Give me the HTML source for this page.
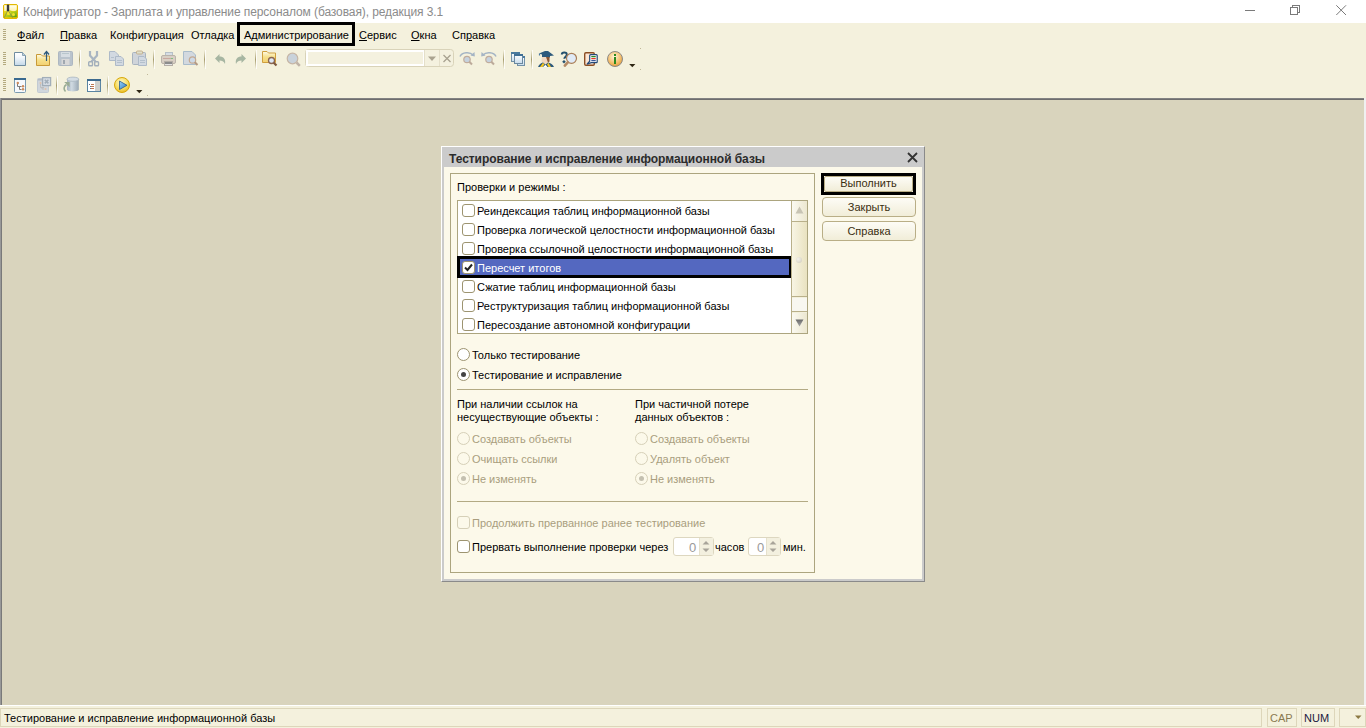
<!DOCTYPE html>
<html><head><meta charset="utf-8">
<style>
*{margin:0;padding:0;box-sizing:border-box}
html,body{width:1366px;height:728px;overflow:hidden;background:#fff;font-family:"Liberation Sans",sans-serif;font-size:11px;color:#000}
.a{position:absolute}
.t{position:absolute;white-space:nowrap;line-height:13px;font-size:11px}
#title{left:0;top:0;width:1366px;height:23px;background:#fff}
#bars{left:0;top:23px;width:1366px;height:75px;background:#f4f1dd}
#ws{left:0;top:98px;width:1366px;height:608px;background:#d9d4bd}
#status{left:0;top:706px;width:1366px;height:22px;background:#f4f1dd}
.grip{position:absolute;width:4px;background:repeating-linear-gradient(#b0a780 0 1px,transparent 1px 2px)}
.sep{position:absolute;width:1px;height:18px;background:#cfc7a4}
.mu{text-decoration:underline}
.dlg{left:441px;top:146px;width:484px;height:436px;background:#cbcbcb;border-left:1px solid #fff;border-top:1px solid #fff;border-right:1px solid #8a8a8a;border-bottom:1px solid #8a8a8a}
.gb{border:1px solid #aca57f}
.cb{position:absolute;width:13px;height:13px;border:1px solid #9d9470;border-radius:3px;background:#fff}
.rb{position:absolute;width:13px;height:13px;border:1px solid #9d9470;border-radius:50%;background:#fff}
.dis{color:#a99e7e}
.btn{position:absolute;height:20px;border:1px solid #b9ae86;border-radius:4px;background:linear-gradient(#fdfcf6,#f1edd8);text-align:center;line-height:18px;font-size:11px;color:#3a2e10}
</style></head><body>
<div id="title" class="a">
  <svg class="a" style="left:3px;top:4px" width="15" height="15" viewBox="0 0 15 15">
    <defs><linearGradient id="gsky" x1="0" y1="0" x2="0" y2="1"><stop offset="0" stop-color="#fffff4"/><stop offset="1" stop-color="#fff2a8"/></linearGradient>
    <linearGradient id="ggr" x1="0" y1="0" x2="1" y2="1"><stop offset="0" stop-color="#f4e020"/><stop offset="0.6" stop-color="#a8c818"/><stop offset="1" stop-color="#4c9a10"/></linearGradient></defs>
    <rect x="0.5" y="0.5" width="14" height="14" rx="1.5" fill="#f2c800" stroke="#e2b800" stroke-width="1"/>
    <rect x="1.2" y="1.2" width="12.6" height="6" fill="url(#gsky)"/>
    <path d="M1.2 7.5Q6 5.5 9 7T13.8 5.5V13.2H1.2Z" fill="url(#ggr)"/>
    <circle cx="5.5" cy="9" r="2" fill="#f6e428"/><circle cx="10.5" cy="10.5" r="1.5" fill="#f0e030"/>
    <path d="M4.5 7L1.2 13.8M5.5 7L9.8 13.8" stroke="#8a8a50" stroke-width=".8"/>
    <rect x="3.8" y="0.5" width="2.4" height="5.5" rx="1" fill="#3c3c3c"/>
    <circle cx="5" cy="6" r="1.3" fill="#2c3444"/>
  </svg>
  <div class="t" style="left:23px;top:5px;font-size:12px;line-height:14px;color:#8b8b8b;letter-spacing:-0.1px">Конфигуратор - Зарплата и управление персоналом (базовая), редакция 3.1</div>
  <div class="a" style="left:1245px;top:10px;width:10px;height:1px;background:#7a7a7a"></div>
  <div class="a" style="left:1292px;top:5px;width:8px;height:8px;border:1px solid #7a7a7a"></div>
  <div class="a" style="left:1290px;top:7px;width:8px;height:8px;border:1px solid #7a7a7a;background:#fff"></div>
  <svg class="a" style="left:1336px;top:5px" width="11" height="11" viewBox="0 0 11 11"><path d="M0.3 0.3L10 10M10 0.3L0.3 10" stroke="#7a7a7a" stroke-width="1"/></svg>
</div>

<div id="bars" class="a">
  <!-- menu -->
  <div class="t" style="left:17px;top:6px"><span class="mu">Ф</span>айл</div>
  <div class="t" style="left:60px;top:6px"><span class="mu">П</span>равка</div>
  <div class="t" style="left:110px;top:6px">Конфигурация</div>
  <div class="t" style="left:191px;top:6px">Отладка</div>
  <div class="a" style="left:237px;top:-1px;width:118px;height:24px;border:3px solid #000"></div>
  <div class="t" style="left:244px;top:6px">Администрирование</div>
  <div class="t" style="left:359px;top:6px"><span class="mu">С</span>ервис</div>
  <div class="t" style="left:411px;top:6px"><span class="mu">О</span>кна</div>
  <div class="t" style="left:452px;top:6px">Сп<span class="mu">р</span>авка</div>
</div>


<div id="icons" class="a" style="left:0;top:0;width:1366px;height:98px">
<svg class="a" style="left:0;top:0" width="660" height="98" viewBox="0 0 660 98">
<defs>
 <linearGradient id="gdoc" x1="0" y1="0" x2="0" y2="1"><stop offset="0" stop-color="#ffffff"/><stop offset="0.35" stop-color="#f4f8fc"/><stop offset="1" stop-color="#c4d8e8"/></linearGradient>
 <linearGradient id="gfold" x1="0" y1="0" x2="0" y2="1"><stop offset="0" stop-color="#fffbe6"/><stop offset="0.5" stop-color="#f6e08a"/><stop offset="1" stop-color="#f2d070"/></linearGradient>
 <linearGradient id="gsep" x1="0" y1="0" x2="0" y2="1"><stop offset="0" stop-color="#f4f1dd"/><stop offset="0.5" stop-color="#a89e70"/><stop offset="1" stop-color="#f4f1dd"/></linearGradient>
 <linearGradient id="gwin" x1="0" y1="0" x2="0" y2="1"><stop offset="0" stop-color="#ffffff"/><stop offset="1" stop-color="#c8dcec"/></linearGradient>
 <radialGradient id="ginfo" cx="0.45" cy="0.35" r="0.7"><stop offset="0" stop-color="#fff4d8"/><stop offset="0.6" stop-color="#f4c070"/><stop offset="1" stop-color="#e09a30"/></radialGradient>
 <radialGradient id="gplay" cx="0.45" cy="0.35" r="0.7"><stop offset="0" stop-color="#fffbd0"/><stop offset="0.6" stop-color="#f6dc60"/><stop offset="1" stop-color="#e8b418"/></radialGradient>
 <linearGradient id="gtri" x1="0" y1="0" x2="1" y2="1"><stop offset="0" stop-color="#9ad4f8"/><stop offset="1" stop-color="#2a78c8"/></linearGradient>
 <linearGradient id="gcyl" x1="0" y1="0" x2="1" y2="0"><stop offset="0" stop-color="#a8b4c0"/><stop offset="0.4" stop-color="#d0dae2"/><stop offset="1" stop-color="#9aa8b4"/></linearGradient>
</defs>
<!-- grips -->
<g fill="#b3a97f">
 <rect x="3" y="29" width="3" height="1"/><rect x="3" y="31" width="3" height="1"/><rect x="3" y="33" width="3" height="1"/><rect x="3" y="35" width="3" height="1"/><rect x="3" y="37" width="3" height="1"/><rect x="3" y="39" width="3" height="1"/>
 <rect x="3" y="52" width="3" height="1"/><rect x="3" y="54" width="3" height="1"/><rect x="3" y="56" width="3" height="1"/><rect x="3" y="58" width="3" height="1"/><rect x="3" y="60" width="3" height="1"/><rect x="3" y="62" width="3" height="1"/><rect x="3" y="64" width="3" height="1"/>
 <rect x="3" y="78" width="3" height="1"/><rect x="3" y="80" width="3" height="1"/><rect x="3" y="82" width="3" height="1"/><rect x="3" y="84" width="3" height="1"/><rect x="3" y="86" width="3" height="1"/><rect x="3" y="88" width="3" height="1"/><rect x="3" y="90" width="3" height="1"/>
</g>
<!-- separators -->
<g>
 <rect x="79" y="50" width="1" height="19" fill="url(#gsep)"/><rect x="80" y="50" width="1" height="19" fill="#fff" opacity=".8"/>
 <rect x="153" y="50" width="1" height="19" fill="url(#gsep)"/><rect x="154" y="50" width="1" height="19" fill="#fff" opacity=".8"/>
 <rect x="204" y="50" width="1" height="19" fill="url(#gsep)"/><rect x="205" y="50" width="1" height="19" fill="#fff" opacity=".8"/>
 <rect x="255" y="50" width="1" height="19" fill="url(#gsep)"/><rect x="256" y="50" width="1" height="19" fill="#fff" opacity=".8"/>
 <rect x="503" y="50" width="1" height="19" fill="url(#gsep)"/><rect x="504" y="50" width="1" height="19" fill="#fff" opacity=".8"/>
 <rect x="531" y="50" width="1" height="19" fill="url(#gsep)"/><rect x="532" y="50" width="1" height="19" fill="#fff" opacity=".8"/>
 <rect x="56" y="76" width="1" height="19" fill="url(#gsep)"/><rect x="57" y="76" width="1" height="19" fill="#fff" opacity=".8"/>
 <rect x="107" y="76" width="1" height="19" fill="url(#gsep)"/><rect x="108" y="76" width="1" height="19" fill="#fff" opacity=".8"/>
</g>
<!-- new doc -->
<path d="M14.5 52.5H22.5L25.5 55.5V65.5H14.5Z" fill="url(#gdoc)" stroke="#6f8ca0"/>
<path d="M22.5 52.5V55.5H25.5" fill="#c0d0dc" stroke="#8aa4b4"/>
<!-- open folder -->
<path d="M36.5 54.5H41L42.5 56H49.5V65.5H36.5Z" fill="url(#gfold)" stroke="#c89a38"/>
<path d="M46.5 61V52" stroke="#2e5a7c" stroke-width="1.2"/>
<path d="M44 54.5L46.5 51.5L49 54.5" fill="none" stroke="#2e5a7c" stroke-width="1.4"/>
<!-- save disabled -->
<rect x="58.5" y="51.5" width="14" height="14" rx="1" fill="#b9c3cc" stroke="#adb7c1"/>
<rect x="61" y="52" width="9" height="5" fill="#d6dde2"/><rect x="62" y="53" width="7" height="1" fill="#b8c6cc"/>
<rect x="61.5" y="59" width="8" height="6" fill="#d8d8d8"/><rect x="63" y="60" width="2" height="4" fill="#a0a8b0"/>
<!-- scissors -->
<path d="M90 51V55.5L95.5 61.5M97 51V55.5L91.5 61.5" fill="none" stroke="#a9b5c1" stroke-width="2.2"/>
<rect x="88.7" y="61.7" width="3.8" height="4" rx=".8" fill="none" stroke="#a3afbb" stroke-width="1.4"/>
<rect x="94.7" y="61.7" width="3.8" height="4" rx=".8" fill="none" stroke="#a3afbb" stroke-width="1.4"/>
<!-- copy -->
<path d="M109.5 51.5H115L118.5 55V60.5H109.5Z" fill="#d2d9e1" stroke="#aebac8"/>
<path d="M115.5 56.5H121L123.5 59V65.5H115.5Z" fill="#d2d9e1" stroke="#aebac8"/>
<path d="M117 60.5H122M117 62.5H122M111 57.5H114" stroke="#b4c0cc"/>
<!-- paste -->
<rect x="132.5" y="52.5" width="13" height="12" rx="1" fill="#cfd4da" stroke="#a8b3bf"/>
<rect x="136.5" y="51" width="6" height="3" rx="1" fill="#dfe0cc" stroke="#c4b08e"/>
<path d="M138.5 56.5H144L146.5 59V65.5H138.5Z" fill="#d2d9e1" stroke="#aebac8"/>
<path d="M140 60.5H145M140 62.5H145" stroke="#b4c0cc"/>
<!-- printer -->
<rect x="165.5" y="52.5" width="7" height="5" fill="#d6dde4" stroke="#b6c0c8"/>
<rect x="161.5" y="55.5" width="14" height="8" rx="1.5" fill="#d8cfc4" stroke="#bab3aa"/>
<rect x="163" y="58" width="10" height="1" fill="#c8a8a0"/><rect x="171" y="58" width="2" height="1" fill="#80c080"/>
<rect x="164.5" y="61.5" width="8" height="4" fill="#e4e4e4" stroke="#b4aea6"/><rect x="165" y="62" width="7" height="2" fill="#8c8c8c"/>
<!-- print preview -->
<path d="M183.5 51.5H192L195.5 55V64.5H183.5Z" fill="#d3d9df" stroke="#a9bccb"/>
<circle cx="192.5" cy="60" r="3.2" fill="#cdd9e6" stroke="#c4aa92" stroke-width="1.2"/>
<path d="M194.8 62.3L197.5 65" stroke="#b39a84" stroke-width="2"/>
<!-- undo -->
<path d="M215 58.5L219.5 54V56.5C223.5 56.5 226 59 225 64C223.8 61 222 60.5 219.5 60.5V63Z" fill="#a7b6a2"/>
<!-- redo -->
<path d="M246 58.5L241.5 54V56.5C237.5 56.5 235 59 236 64C237.2 61 239 60.5 241.5 60.5V63Z" fill="#a7b6a2"/>
<!-- folder search -->
<path d="M262.5 51.5H267L268.5 53H275.5V62.5H262.5Z" fill="url(#gfold)" stroke="#cf9f3e"/>
<circle cx="271.5" cy="60.5" r="3" fill="#dde8f6" stroke="#8a6652" stroke-width="1.3"/>
<path d="M273.7 62.7L276.5 65.5" stroke="#7e5a40" stroke-width="2.2"/>
<!-- search disabled -->
<circle cx="292.5" cy="58.5" r="5.3" fill="#c9d2da" stroke="#c6b6a6" stroke-width="1.2"/>
<path d="M296.5 62.5L299.8 65.8" stroke="#c0b4a8" stroke-width="2.5"/>
<!-- search box -->
<rect x="305.5" y="49.5" width="148" height="17" rx="3" fill="#f4f1df" stroke="#d9d3b9"/>
<rect x="307" y="51" width="117" height="14" fill="none" stroke="#fff" stroke-width="2"/>
<rect x="424" y="50" width="1" height="16" fill="#e4dfca"/>
<rect x="439" y="50" width="1" height="16" fill="#e4dfca"/>
<path d="M428 56.5H436L432 61Z" fill="#aaa390"/>
<path d="M443.5 55L450.5 62M450.5 55L443.5 62" stroke="#a8a290" stroke-width="1.3"/>
<!-- find next -->
<path d="M460 56.5C462 52 470 51.5 473 55" fill="none" stroke="#a4b4c4" stroke-width="1.5"/>
<path d="M470.5 55.5L474.8 56.5L474.5 52Z" fill="#a4b4c4"/>
<circle cx="467" cy="59.5" r="3.2" fill="#c6d2de" stroke="#c0ac9c" stroke-width="1.2"/>
<path d="M469.3 61.8L472 64.5" stroke="#bcaa9a" stroke-width="2"/>
<!-- find prev -->
<path d="M496 56.5C494 52 486 51.5 483 55" fill="none" stroke="#a4b4c4" stroke-width="1.5"/>
<path d="M485.5 55.5L481.2 56.5L481.5 52Z" fill="#a4b4c4"/>
<circle cx="489" cy="59.5" r="3.2" fill="#c6d2de" stroke="#c0ac9c" stroke-width="1.2"/>
<path d="M491.3 61.8L494 64.5" stroke="#bcaa9a" stroke-width="2"/>
<!-- windows -->
<rect x="511.5" y="52.5" width="8" height="9" fill="url(#gwin)" stroke="#7290a6"/>
<rect x="511" y="52" width="9" height="2" fill="#4a7a9e"/>
<rect x="517.5" y="56.5" width="7" height="9" fill="url(#gwin)" stroke="#7290a6"/>
<rect x="517" y="56" width="8" height="2" fill="#4a7a9e"/>
<rect x="514.5" y="54.5" width="8" height="9" fill="url(#gwin)" stroke="#6a88a0"/>
<rect x="514" y="54" width="9" height="2" fill="#3f6f94"/>
<!-- student -->
<path d="M539 53.5L545 51H548L554 55.5L550 56V57.5H542V54.5Z" fill="#2d5a7c"/>
<path d="M539.5 53.5V55.5" stroke="#4a78a0" stroke-width="1.2"/>
<path d="M542 57H549V61C549 63 547.5 64 545.5 64C543 64 541.5 62 541.5 60Z" fill="#f2d8c0"/>
<path d="M546 57H549.5V61.5L548 62.5Z" fill="#8a5634"/>
<path d="M538 67C539 64.5 541 63 543 62.5L545.5 64.5L548 62.5C550.5 63 553 64.5 554 67Z" fill="#2d5a7c"/>
<path d="M540 67L543 62.8L544.5 64.5L542.5 67ZM548.5 67L547 64.5L548.5 62.8L551 67Z" fill="#f4c520"/>
<path d="M543 67L545.5 64.8L547.5 67Z" fill="#ffffff"/>
<!-- help search -->
<path d="M561.8 54.5C561.8 52 566.8 51.5 566.8 54.5C566.8 56.5 564.3 56.8 564.3 58.8" fill="none" stroke="#24506e" stroke-width="2"/>
<path d="M564 60L565.8 61.8L564 63.6L562.2 61.8Z" fill="#24506e"/>
<circle cx="571.5" cy="58.3" r="5" fill="#e0eaf6" stroke="#a97e58" stroke-width="1.2"/>
<path d="M567.8 62.3L564.8 65.6" stroke="#b48a66" stroke-width="2.6" stroke-linecap="round"/>
<!-- doc -->
<rect x="584.7" y="52.7" width="9.6" height="12.6" rx="1.2" fill="#fde6d4" stroke="#8a4e24" stroke-width="1.4"/>
<path d="M590.7 54.6H596.3Q597.2 54.6 597.2 55.5V61.8Q597.2 62.7 596.3 62.7H591.2L587 64.2L589.7 61.2V55.5Q589.7 54.6 590.7 54.6Z" fill="#ffffff" stroke="#244a78" stroke-width="1.2"/>
<rect x="591.2" y="56" width="4.6" height="1.2" rx=".5" fill="#2e8a22"/><rect x="591.2" y="58" width="4.6" height="1.2" rx=".5" fill="#e03a24"/><rect x="591.2" y="60" width="4.6" height="1.2" rx=".5" fill="#3a5a9a"/>
<!-- info -->
<circle cx="615" cy="59" r="7.5" fill="url(#ginfo)" stroke="#8c8a86" stroke-width="1"/>
<rect x="614" y="54" width="2" height="2" fill="#2a8a1e"/>
<rect x="614" y="57" width="2" height="7" fill="#2a8a1e"/>
<path d="M629.2 64H635.4L632.3 67.2Z" fill="#2e2614"/>
<rect x="640" y="48" width="1" height="1" fill="#c0b898"/><rect x="640" y="69" width="1" height="1" fill="#c0b898"/>
<!-- row2: tree -->
<rect x="14.5" y="78.5" width="11" height="14" rx="1" fill="#f6f9fc" stroke="#7a9ab0"/>
<rect x="14" y="78" width="12" height="2" fill="#3a6a90"/>
<path d="M17.5 84V86.5H21.5M19.5 86.5V89.5H21.5" fill="none" stroke="#7c7c7c" stroke-width="1"/>
<circle cx="17.8" cy="83" r="1.2" fill="#cc8a5a"/><circle cx="23" cy="86.2" r="1.2" fill="#cc8a5a"/><circle cx="23" cy="89.3" r="1.2" fill="#cc8a5a"/>
<!-- row2: close-disabled -->
<rect x="37.5" y="78.5" width="11" height="14" rx="1" fill="#d0d6dc" stroke="#c2cad2"/>
<rect x="38" y="79" width="10" height="1.5" fill="#b4bcc4"/>
<circle cx="40.5" cy="83" r="1" fill="#e0c0a8"/><circle cx="45.5" cy="89" r="1" fill="#e0c0a8"/>
<path d="M40.5 84V87.5H44M42 87.5V89H44" fill="none" stroke="#b8b8b8" stroke-width=".8"/>
<rect x="42.6" y="77.6" width="8" height="8" fill="#d6dde4" stroke="#a2aeb9" stroke-width="1.3"/>
<path d="M44.8 79.8L48.4 83.4M48.4 79.8L44.8 83.4" stroke="#a2aeb9" stroke-width="1.6"/>
<!-- row2: db -->
<path d="M67 79V89.5C67 92 78.8 92 78.8 89.5V79Z" fill="url(#gcyl)"/>
<ellipse cx="72.9" cy="79.2" rx="5.9" ry="2.1" fill="#d4dde4" stroke="#aab6c0" stroke-width=".8"/>
<path d="M66.5 84.5C63.5 86.5 63.5 89.5 65.5 91.5" fill="none" stroke="#9aac94" stroke-width="1.6"/>
<path d="M64.2 82H69.6V87.2Z" fill="#9aac94"/>
<!-- row2: table window -->
<rect x="87.5" y="79.5" width="13" height="12" fill="#ffffff" stroke="#5a84a2"/>
<rect x="87" y="79" width="14" height="2" fill="#3c6a8e"/>
<rect x="95" y="81" width="5" height="10" fill="#cfd0cc"/>
<rect x="89" y="84" width="1" height="1" fill="#607890"/><rect x="91" y="84" width="3" height="1" fill="#c07850"/>
<rect x="90" y="86" width="1" height="1" fill="#607890"/><rect x="91" y="86" width="3" height="1" fill="#c07850"/>
<rect x="90" y="88" width="1" height="1" fill="#607890"/><rect x="91" y="88" width="3" height="1" fill="#c07850"/>
<!-- row2: play -->
<circle cx="122" cy="85" r="7.5" fill="url(#gplay)" stroke="#d8a80c" stroke-width="1"/>
<path d="M119.5 81L127 85.3L119.5 89.5Z" fill="url(#gtri)" stroke="#2a5a8a" stroke-width=".8"/>
<path d="M136.2 90H142.4L139.3 93.2Z" fill="#2e2614"/>
<rect x="147" y="74" width="1" height="1" fill="#c0b898"/><rect x="147" y="95" width="1" height="1" fill="#c0b898"/>
</svg>
</div>

<div id="ws" class="a">
  <div class="a" style="left:0;top:0;width:1366px;height:2px;background:linear-gradient(#8c8c8c,#646464)"></div>
  <div class="a" style="left:0;top:0;width:2px;height:607px;background:linear-gradient(90deg,#a8a8a8,#6a6a6a)"></div>
  <div class="a" style="left:1364px;top:0;width:2px;height:608px;background:#f0f0f0"></div>
  <div class="a" style="left:0;top:607px;width:1366px;height:1px;background:#fff"></div>
</div>

<div id="status" class="a">
  <div class="a" style="left:0px;top:2px;width:1262px;height:19px;border:1px solid #ddd6ba"></div>
  <div class="t" style="left:4px;top:6px">Тестирование и исправление информационной базы</div>
  <div class="a" style="left:1267px;top:2px;width:30px;height:19px;border:1px solid #ddd6ba"></div>
  <div class="t" style="left:1270px;top:6px;color:#8a7a50">CAP</div>
  <div class="a" style="left:1301px;top:2px;width:34px;height:19px;border:1px solid #ddd6ba"></div>
  <div class="t" style="left:1304px;top:6px;color:#1a1a40">NUM</div>
  <div class="a" style="left:1339px;top:2px;width:27px;height:19px;border:1px solid #ddd6ba"></div>
  <svg class="a" style="left:1355px;top:9px" width="7" height="5" viewBox="0 0 7 5"><path d="M0 0.5H6.5L3.25 4Z" fill="#8c7a44"/></svg>
</div>

<!-- dialog -->
<div class="a dlg">
  <div class="t" style="left:7px;top:5px;font-weight:bold;font-size:12px;line-height:14px;color:#2b2b2b;letter-spacing:-0.05px">Тестирование и исправление информационной базы</div>
  <svg class="a" style="left:465px;top:5px" width="11" height="11" viewBox="0 0 11 11"><path d="M1 1L10 10M10 1L1 10" stroke="#333" stroke-width="1.8"/></svg>
  <div class="a" style="left:2px;top:20px;width:478px;height:412px;background:#fcf9ea"></div>
  <!-- group box -->
  <div class="a gb" style="left:8px;top:26px;width:365px;height:400px"></div>
  <div class="t" style="left:15px;top:34px">Проверки и режимы :</div>
  <!-- list -->
  <div class="a" style="left:15px;top:53px;width:351px;height:134px;border:1px solid #aca57f;background:#fff"></div>
  <div class="cb" style="left:20px;top:57px"></div><div class="t" style="left:35px;top:58px">Реиндексация таблиц информационной базы</div>
  <div class="cb" style="left:20px;top:76px"></div><div class="t" style="left:35px;top:77px">Проверка логической целостности информационной базы</div>
  <div class="cb" style="left:20px;top:95px"></div><div class="t" style="left:35px;top:96px">Проверка ссылочной целостности информационной базы</div>
  <div class="a" style="left:15px;top:109px;width:335px;height:22px;border:3px solid #000;background:#5468c0"></div>
  <div class="cb" style="left:20px;top:114px"></div>
  <svg class="a" style="left:21px;top:115px" width="11" height="11" viewBox="0 0 11 11"><path d="M2 5.5L4.5 8L9 2.5" fill="none" stroke="#222" stroke-width="2"/></svg>
  <div class="t" style="left:35px;top:115px;color:#fff">Пересчет итогов</div>
  <div class="cb" style="left:20px;top:133px"></div><div class="t" style="left:35px;top:134px">Сжатие таблиц информационной базы</div>
  <div class="cb" style="left:20px;top:152px"></div><div class="t" style="left:35px;top:153px">Реструктуризация таблиц информационной базы</div>
  <div class="cb" style="left:20px;top:171px"></div><div class="t" style="left:35px;top:172px">Пересоздание автономной конфигурации</div>
  <!-- scrollbar -->
  <div class="a" style="left:349px;top:54px;width:16px;height:132px;background:#f3f0dc;border-left:1px solid #b9b08a"></div>
  <div class="a" style="left:350px;top:54px;width:15px;height:21px;background:linear-gradient(90deg,#fbfaf2,#ece7cf);border-bottom:1px solid #b9b08a"></div>
  <svg class="a" style="left:353px;top:59px" width="9" height="8" viewBox="0 0 9 8"><path d="M4.5 0.5L8.5 7.5H0.5Z" fill="#c8c4b4"/></svg>
  <div class="a" style="left:350px;top:75px;width:15px;height:75px;background:linear-gradient(90deg,#f8f5e4,#e9e2c0);border-bottom:1px solid #b9b08a"></div>
  <div class="a" style="left:354px;top:110px;width:6px;height:6px;border-radius:50%;background:radial-gradient(circle at 35% 35%,#f4f2ea,#cfcabb)"></div>
  <div class="a" style="left:350px;top:151px;width:15px;height:14px;background:#f8f7f0;border-bottom:1px solid #b9b08a"></div>
  <div class="a" style="left:350px;top:166px;width:15px;height:20px;background:linear-gradient(90deg,#fbfaf2,#ece7cf)"></div>
  <svg class="a" style="left:353px;top:172px" width="9" height="8" viewBox="0 0 9 8"><defs><linearGradient id="gdn" x1="0" y1="0" x2="0" y2="1"><stop offset="0" stop-color="#6a6a6a"/><stop offset="1" stop-color="#a8a8a8"/></linearGradient></defs><path d="M0.5 0.5H8.5L4.5 7.5Z" fill="url(#gdn)"/></svg>
  <!-- radios -->
  <div class="rb" style="left:15px;top:201px"></div><div class="t" style="left:30px;top:202px">Только тестирование</div>
  <div class="rb" style="left:15px;top:221px"><div class="a" style="left:3px;top:3px;width:5px;height:5px;border-radius:50%;background:#444"></div></div><div class="t" style="left:30px;top:222px">Тестирование и исправление</div>
  <div class="a" style="left:15px;top:242px;width:351px;height:1px;background:#b3aa84"></div>
  <div class="t" style="left:15px;top:251px">При наличии ссылок на<br>несуществующие объекты :</div>
  <div class="t" style="left:193px;top:251px">При частичной потере<br>данных объектов :</div>
  <div class="rb" style="left:15px;top:285px;border-color:#d6d0b8;background:transparent"></div><div class="t dis" style="left:30px;top:286px">Создавать объекты</div>
  <div class="rb" style="left:15px;top:305px;border-color:#d6d0b8;background:transparent"></div><div class="t dis" style="left:30px;top:306px">Очищать ссылки</div>
  <div class="rb" style="left:15px;top:325px;border-color:#d6d0b8;background:transparent"><div class="a" style="left:3px;top:3px;width:5px;height:5px;border-radius:50%;background:#c4c0b0"></div></div><div class="t dis" style="left:30px;top:326px">Не изменять</div>
  <div class="rb" style="left:193px;top:285px;border-color:#d6d0b8;background:transparent"></div><div class="t dis" style="left:208px;top:286px">Создавать объекты</div>
  <div class="rb" style="left:193px;top:305px;border-color:#d6d0b8;background:transparent"></div><div class="t dis" style="left:208px;top:306px">Удалять объект</div>
  <div class="rb" style="left:193px;top:325px;border-color:#d6d0b8;background:transparent"><div class="a" style="left:3px;top:3px;width:5px;height:5px;border-radius:50%;background:#c4c0b0"></div></div><div class="t dis" style="left:208px;top:326px">Не изменять</div>
  <div class="a" style="left:15px;top:354px;width:351px;height:1px;background:#b3aa84"></div>
  <div class="cb" style="left:15px;top:369px;border-color:#d6d0b8;background:transparent"></div><div class="t dis" style="left:30px;top:370px">Продолжить прерванное ранее тестирование</div>
  <div class="cb" style="left:15px;top:393px"></div><div class="t" style="left:30px;top:394px">Прервать выполнение проверки через</div>
  <div class="a" style="left:231px;top:390px;width:41px;height:19px;border:1px solid #ddd7c0;border-radius:3px;background:#fff"></div>
  <div class="a" style="left:257px;top:391px;width:14px;height:17px;background:#f3f0df;border-left:1px solid #e6e1cc"></div>
  <div class="t" style="left:247px;top:393px;color:#9a9a9a;font-size:13px;line-height:15px">0</div>
  <svg class="a" style="left:260px;top:393px" width="8" height="13" viewBox="0 0 8 13"><path d="M0.5 4.5L4 1L7.5 4.5ZM0.5 8.5L4 12L7.5 8.5Z" fill="#a8a49a"/></svg>
  <div class="t" style="left:273px;top:394px">часов</div>
  <div class="a" style="left:306px;top:390px;width:33px;height:19px;border:1px solid #ddd7c0;border-radius:3px;background:#fff"></div>
  <div class="a" style="left:324px;top:391px;width:14px;height:17px;background:#f3f0df;border-left:1px solid #e6e1cc"></div>
  <div class="t" style="left:315px;top:393px;color:#9a9a9a;font-size:13px;line-height:15px">0</div>
  <svg class="a" style="left:327px;top:393px" width="8" height="13" viewBox="0 0 8 13"><path d="M0.5 4.5L4 1L7.5 4.5ZM0.5 8.5L4 12L7.5 8.5Z" fill="#a8a49a"/></svg>
  <div class="t" style="left:341px;top:394px">мин.</div>
  <!-- buttons -->
  <div class="a" style="left:379px;top:26px;width:95px;height:22px;border:3px solid #000"></div>
  <div class="btn" style="left:382px;top:29px;width:89px;height:16px;line-height:12px;border-radius:2px">Выполнить</div>
  <div class="btn" style="left:380px;top:50px;width:94px;height:20px;line-height:18px">Закрыть</div>
  <div class="btn" style="left:380px;top:74px;width:94px;height:20px;line-height:18px">Справка</div>
</div>
</body></html>
